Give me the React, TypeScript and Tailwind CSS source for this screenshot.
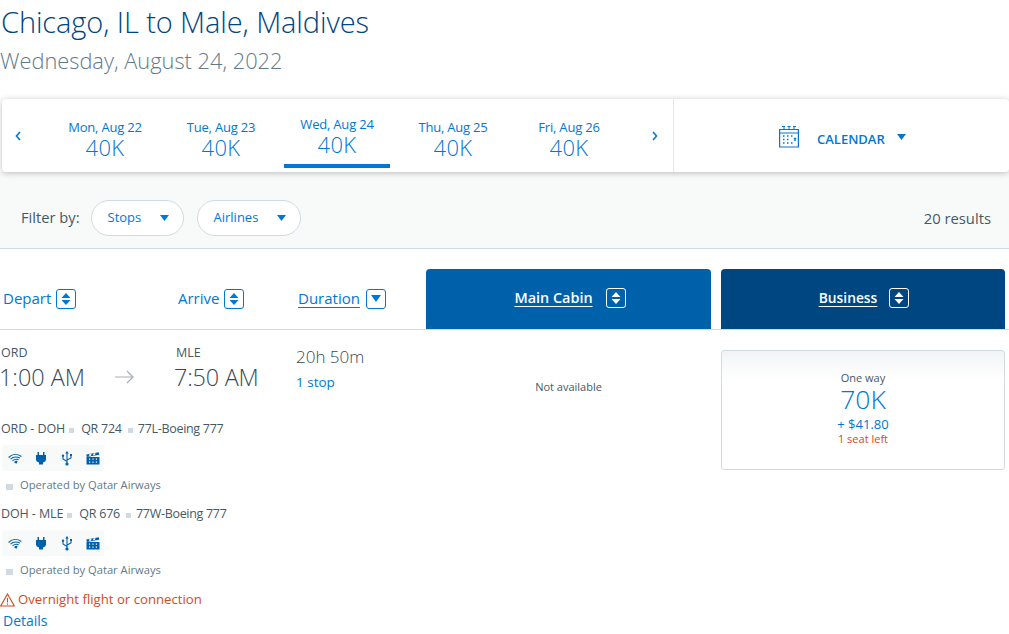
import React from "react";

const Caret = ({ className = "" }: { className?: string }) => (
  <svg width="9" height="6" viewBox="0 0 9 6" className={className}>
    <path d="M0 0h9L4.500 6z" fill="currentColor" />
  </svg>
);

const Sort = ({ light = false, down = false }: { light?: boolean; down?: boolean }) => (
  <span
    className={`inline-flex h-[20px] w-[20px] shrink-0 items-center justify-center rounded-[3px] border ${
      light ? "border-white text-white" : "border-[#0078d2] text-[#0078d2]"
    }`}
  >
    <svg width="12" height="14" viewBox="0 0 12 14">
      {down ? (
        <path d="M1 3h10L6 10z" fill="currentColor" />
      ) : (
        <path d="M6 1l4.500 5h-9zM1.500 8h9L6 13z" fill="currentColor" />
      )}
    </svg>
  </span>
);

const Day = ({ d, active = false }: { d: string; active?: boolean }) => (
  <div className={`flex w-[106px] flex-col items-center ${active ? "-mt-[3px] h-[53px] border-b-[4px] border-[#0078d2]" : ""} text-[#0078d2]`}>
    <span className="text-[13px] leading-[18px] tracking-[-0.2px]">{d}</span>
    <span className="text-[22px] leading-[22px] font-light tracking-[0.3px]">40K</span>
  </div>
);

const Pill = ({ label, w }: { label: string; w: string }) => (
  <div className={`flex h-[36px] items-center justify-between rounded-full border border-[#d0dae0] bg-white pl-[16px] pr-[14px] text-[13px] text-[#0078d2] ${w}`}>
    <span>{label}</span>
    <Caret />
  </div>
);

const Dot = ({ className = "" }: { className?: string }) => (
  <span className={`mt-[2px] inline-block h-[5px] w-[5px] bg-[#d0dae0] ${className}`} />
);

const Amenities = () => (
  <div className="mt-[7px] ml-[2px] flex h-[26px] w-[102px] items-center rounded-[2px] bg-[#f8fafa] pl-[6px] text-[#0061ab]">
    <svg width="14" height="12" viewBox="0 0 14 12" fill="none" stroke="currentColor" strokeWidth="1.100">
      <path d="M.600 5.500C4 2 9 1.500 13.400 4.500" />
      <path d="M2.500 7.200C5 4.800 8.500 4.500 12 6" />
      <path d="M4.500 8.800C6.300 7.300 8.500 7 10.600 7.600" />
      <path d="M6.800 10.200C7.500 9.400 8.400 9.200 9 9.500L8.200 11z" fill="currentColor" />
    </svg>
    <svg width="12" height="14" viewBox="0 0 12 14" fill="currentColor" className="ml-[13px]">
      <path d="M2.500 1h1.500v3h4V1h1.500v3h1.500v4.500c0 1.500-1.500 2.700-3 2.900V13.500h-4v-2.100c-1.500-.2-3-1.400-3-2.900V4h1.500z" />
    </svg>
    <svg width="12" height="15" viewBox="0 0 12 15" fill="none" stroke="currentColor" strokeWidth="1.100" className="ml-[14px]">
      <path d="M6 2v11M6 10.500L2 8V5.500M6 9l4-2V4.500" />
      <path d="M6 0l1.800 2.500H4.200z" fill="currentColor" stroke="none" />
      <circle cx="6" cy="13" r="1.600" fill="currentColor" stroke="none" />
      <circle cx="2" cy="4.800" r="1.200" fill="currentColor" stroke="none" />
      <rect x="9" y="3" width="2" height="2" fill="currentColor" stroke="none" />
    </svg>
    <svg width="14" height="13" viewBox="0 0 14 13" fill="currentColor" className="ml-[13px]">
      <path d="M.500 5h13v7.500H.500z" />
      <path d="M.300 2.600L12.800.2l.5 2.500L.800 5z" />
      <path d="M3 6.500h1.200v1.300H3zM6.400 6.500h1.200v1.300H6.400zM9.800 6.500h1.200v1.300H9.800zM3 9.500h1.200v1.300H3zM6.400 9.500h1.200v1.300H6.400zM9.800 9.500h1.200v1.300H9.800z" fill="#f8fafa" />
      <path d="M3.500 2.100l2-.4-.5 2-2 .4zM7.500 1.400l2-.4-.5 2-2 .4z" fill="#f8fafa" />
    </svg>
  </div>
);

const Segment = ({ a, b, c }: { a: string; b: string; c: string }) => (
  <div>
    <div className="flex h-[17px] items-center pl-[1px] text-[12.500px] tracking-[-0.1px] text-[#465866]">
      <span>{a}</span>
      <Dot className="ml-[4px]" />
      <span className="ml-[7px] tracking-[-0.25px]">{b}</span>
      <Dot className="ml-[6px]" />
      <span className="ml-[5px] tracking-[-0.3px]">{c}</span>
    </div>
    <Amenities />
    <div className="mt-[6px] flex h-[17px] items-center gap-[7px] pl-[6px] text-[11.200px] text-[#627a88]">
      <Dot className="mt-0 h-[6px] w-[7px]" />
      <span>Operated by Qatar Airways</span>
    </div>
  </div>
);

export default function App() {
  return (
    <div className="h-[634px] w-[1009px] overflow-hidden bg-white font-['Open_Sans',sans-serif]">
      <h1 className="h-[47px] pt-[3px] pl-[1px] text-[29px] leading-[38px] font-light tracking-[-0.1px] text-[#00467f]">
        Chicago, IL to Male, Maldives
      </h1>
      <p className="h-[52px] text-[21.800px] leading-[28px] font-light text-[#627a88]">
        Wednesday, August 24, 2022
      </p>

      <div className="relative z-10 ml-[2px] flex h-[73px] rounded-[4px] bg-white shadow-[0_1px_6px_rgba(0,0,0,0.25)]">
        <div className="flex w-[672px] items-start border-r border-[#e4e8ea] pt-[19px]">
          <svg width="6" height="10" viewBox="0 0 6 10" fill="none" stroke="#0078d2" strokeWidth="1.600" className="ml-[13px] mr-[31px] mt-[13px]">
            <path d="M5 1L1.500 5 5 9" />
          </svg>
          <div className="flex w-[570px] gap-[10px]">
            <Day d="Mon, Aug 22" />
            <Day d="Tue, Aug 23" />
            <Day d="Wed, Aug 24" active />
            <Day d="Thu, Aug 25" />
            <Day d="Fri, Aug 26" />
          </div>
          <svg width="6" height="10" viewBox="0 0 6 10" fill="none" stroke="#0078d2" strokeWidth="1.600" className="ml-[30px] mt-[13px]">
            <path d="M1 1l3.500 4L1 9" />
          </svg>
        </div>
        <div className="flex flex-1 items-center pl-[105px] text-[#0078d2]">
          <svg width="20" height="23" viewBox="0 0 20 23" fill="none" stroke="currentColor" strokeWidth="1.200" className="mt-[1px]">
            <path d="M.600 4.500h18.800v17.500H.600zM.600 8h18.800" />
            <path d="M3 1.500h3M8.500 1.500h3M14 1.500h3M5 1v3M10 1v3M15 1v3" strokeWidth="1" />
            <path d="M4 11h1.500M8 11h1.500M12 11h1.500M4 14.500h1.500M8 14.500h1.500M15 13l2 2.500m0-2.500l-2 2.500M4 18h1.500M8 18h1.500M12 18h1.500" strokeWidth="1.300" />
          </svg>
          <span className="ml-[18px] mt-[9px] text-[13px] font-semibold">CALENDAR</span>
          <Caret className="ml-[12px] mt-[3px]" />
        </div>
      </div>

      <div className="flex h-[77px] items-center border-b border-[#d0dae0] bg-[#f8fafa] pl-[21px] pr-[18px] pt-[15px]">
        <span className="mr-[11px] text-[14.700px] text-[#465866]">Filter by:</span>
        <div className="flex gap-[13px]">
          <Pill label="Stops" w="w-[93px]" />
          <Pill label="Airlines" w="w-[104px] pl-[15px]" />
        </div>
        <span className="ml-auto mt-[1px] text-[14.800px] text-[#465866]">20 results</span>
      </div>

      <div className="flex h-[81px] items-end border-b border-[#d0dae0] text-[#0078d2]">
        <div className="flex h-full w-[426px] items-center pt-[19px] text-[15px]">
          <div className="flex w-[175px] items-center gap-[5px] pl-[3px]">
            <span>Depart</span>
            <Sort />
          </div>
          <div className="flex w-[120px] items-center gap-[5px] pl-[3px]">
            <span>Arrive</span>
            <Sort />
          </div>
          <div className="flex items-center gap-[6px] pl-[3px]">
            <span className="underline underline-offset-[3px]">Duration</span>
            <Sort down />
          </div>
        </div>
        <div className="flex h-[60px] w-[285px] items-center justify-center gap-[13px] rounded-t-[4px] bg-[#0061ab] pb-[2px] pl-[3px] text-[14.400px] font-semibold text-white">
          <span className="underline underline-offset-[3px]">Main Cabin</span>
          <Sort light />
        </div>
        <div className="ml-[10px] flex h-[60px] w-[284px] items-center justify-center gap-[12px] rounded-t-[4px] bg-[#004681] pb-[2px] pl-[2px] text-[13.800px] font-semibold text-white">
          <span className="underline underline-offset-[3px]">Business</span>
          <Sort light />
        </div>
      </div>

      <div className="flex">
        <div className="w-[426px]">
          <div className="flex h-[88px] pt-[14px]">
            <div className="w-[115px]">
              <div className="pl-[1px] text-[12.500px] leading-[17px] text-[#465866]">ORD</div>
              <div className="-ml-[1px] mt-[2px] text-[23.400px] leading-[29px] font-light text-[#36495a]">1:00 AM</div>
            </div>
            <div className="w-[60px] pt-[26px]">
              <svg width="19" height="14" viewBox="0 0 19 14" fill="none" stroke="#a8b0b5" strokeWidth="1.200">
                <path d="M0 7h18M12 1l6 6-6 6" />
              </svg>
            </div>
            <div className="w-[121px]">
              <div className="pl-[1px] text-[12.500px] leading-[17px] text-[#465866]">MLE</div>
              <div className="-ml-[1px] mt-[2px] text-[23.400px] leading-[29px] font-light tracking-[-0.2px] text-[#36495a]">7:50 AM</div>
            </div>
            <div className="pt-[1px]">
              <div className="text-[17px] leading-[24px] font-light text-[#36495a]">20h 50m</div>
              <div className="mt-[3px] text-[13.500px] leading-[20px] text-[#0078d2]">1 stop</div>
            </div>
          </div>
          <div className="flex flex-col gap-[12px] pt-[3px]">
            <Segment a="ORD - DOH" b="QR 724" c="77L-Boeing 777" />
            <Segment a="DOH - MLE" b="QR 676" c="77W-Boeing 777" />
          </div>
          <div className="mt-[11px] flex h-[20px] items-center gap-[3px] text-[13.200px] text-[#d14b1c]">
            <svg width="15" height="14" viewBox="0 0 15 14" fill="none" stroke="currentColor" strokeWidth="1.100">
              <path d="M7.500 1L14.300 13H.700zM7.500 5v4.500M7.500 10.500v1.200" />
            </svg>
            <span>Overnight flight or connection</span>
          </div>
          <div className="mt-[1px] pl-[3px] text-[14px] leading-[20px] text-[#0078d2]">Details</div>
        </div>
        <div className="w-[285px] pt-[48px] text-center text-[11px] leading-[18px] text-[#465866]">Not available</div>
        <div className="ml-[10px] mt-[20px] flex h-[120px] w-[284px] flex-col items-center rounded-[3px] border border-[#d0dae0] bg-gradient-to-b from-[#f1f4f6] via-white via-[25%] to-white pt-[19px]">
          <div className="text-[11px] leading-[16px] text-[#465866]">One way</div>
          <div className="text-[26.500px] leading-[26px] font-light text-[#0078d2]">70K</div>
          <div className="mt-[4px] text-[13px] leading-[16px] text-[#0078d2]">+ $41.80</div>
          <div className="text-[11px] leading-[14px] text-[#d14b1c]">1 seat left</div>
        </div>
      </div>
    </div>
  );
}
